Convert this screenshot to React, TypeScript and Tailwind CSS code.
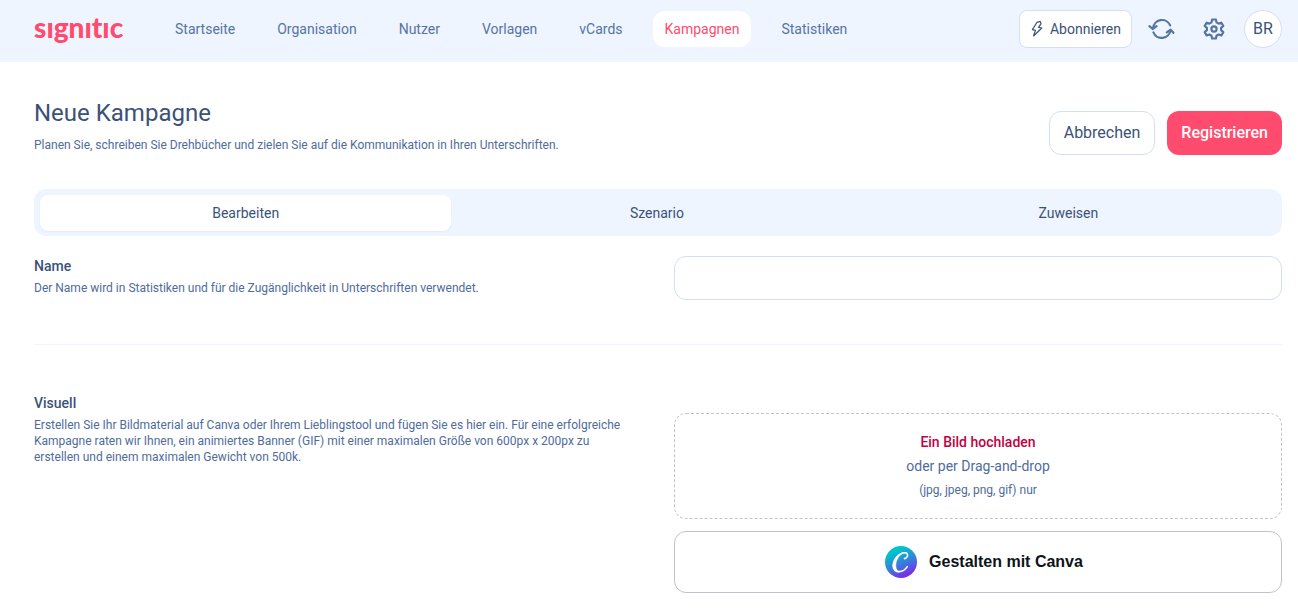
import clsx from "clsx";

const NAV = [
  "Startseite",
  "Organisation",
  "Nutzer",
  "Vorlagen",
  "vCards",
  "Kampagnen",
  "Statistiken",
];

const TABS = ["Bearbeiten", "Szenario", "Zuweisen"];

export default function App() {
  return (
    <div className="min-h-screen bg-white font-['Roboto',sans-serif] text-[#3b5278]">
      <Header />
      <main className="pr-4 pb-4 pl-[34px]">
        <TitleBar />
        <Tabs />
        <NameRow />
        <VisualRow />
      </main>
    </div>
  );
}

function Header() {
  return (
    <header className="flex h-[62px] items-center bg-[#eff5ff] pr-4 pb-1 pl-[34px]">
      <a
        href="#"
        aria-label="signitic"
        className="w-[129px] shrink-0 pb-1 font-['Lato',sans-serif] text-[28px] leading-8 font-black text-[#ff4b6e] [font-variant-ligatures:none]"
      >
        sıgnıtıc
      </a>
      <nav className="flex flex-1 items-center gap-[18px]">
        {NAV.map((item) => (
          <a
            key={item}
            href="#"
            className={clsx(
              "rounded-xl px-3 text-sm leading-9",
              item === "Kampagnen"
                ? "bg-white text-[#ff4b6e]"
                : "text-[#5574a3]",
            )}
          >
            {item}
          </a>
        ))}
      </nav>
      <div className="flex items-center">
        <button
          type="button"
          className="flex h-[38px] items-center gap-1 rounded-lg border border-[#d3dff5] bg-white px-2.5 text-sm"
        >
          <BoltIcon />
          Abonnieren
        </button>
        <button type="button" aria-label="Aktualisieren" className="ml-4">
          <RefreshIcon />
        </button>
        <button type="button" aria-label="Einstellungen" className="ml-[26px]">
          <GearIcon />
        </button>
        <button
          type="button"
          className="ml-[18px] size-[38px] rounded-full border border-[#d3dff5] bg-white text-base"
        >
          BR
        </button>
      </div>
    </header>
  );
}

function TitleBar() {
  return (
    <div className="flex items-center justify-between pt-[33px]">
      <div>
        <h1 className="text-2xl leading-8">Neue Kampagne</h1>
        <p className="mt-2 text-xs leading-4 text-[#4f6c9b]">
          Planen Sie, schreiben Sie Drehbücher und zielen Sie auf die
          Kommunikation in Ihren Unterschriften.
        </p>
      </div>
      <div className="mt-4 flex gap-3">
        <button
          type="button"
          className="h-11 rounded-xl border border-[#d3dff5] px-3.5 text-base"
        >
          Abbrechen
        </button>
        <button
          type="button"
          className="h-11 rounded-xl bg-[#ff4b6e] px-3.5 text-base font-medium text-white"
        >
          Registrieren
        </button>
      </div>
    </div>
  );
}

function Tabs() {
  return (
    <div
      role="tablist"
      className="mt-[34px] grid grid-cols-3 rounded-xl bg-[#eff5ff] pt-1.5 pr-2 pb-[5px] pl-1.5"
    >
      {TABS.map((tab, i) => (
        <button
          key={tab}
          type="button"
          role="tab"
          aria-selected={i === 0}
          className={clsx(
            "h-9 rounded-lg text-sm",
            i === 0 && "bg-white shadow-xs",
          )}
        >
          {tab}
        </button>
      ))}
    </div>
  );
}

function NameRow() {
  return (
    <div className="grid grid-cols-[minmax(0,592fr)_minmax(0,608fr)] gap-12 border-b border-[#eff5ff] pt-5 pb-11">
      <div>
        <label htmlFor="name" className="block text-sm leading-5 font-medium">
          Name
        </label>
        <p className="mt-1 text-xs leading-4 text-[#4f6c9b]">
          Der Name wird in Statistiken und für die Zugänglichkeit in
          Unterschriften verwendet.
        </p>
      </div>
      <input
        id="name"
        type="text"
        className="h-11 w-full rounded-xl border border-[#d3dff5] px-3 outline-none"
      />
    </div>
  );
}

function VisualRow() {
  return (
    <div className="grid grid-cols-[minmax(0,592fr)_minmax(0,608fr)] gap-12 pt-12">
      <div>
        <h2 className="text-sm leading-5 font-medium">Visuell</h2>
        <p className="mt-1 text-xs leading-4 text-[#4f6c9b]">
          Erstellen Sie Ihr Bildmaterial auf Canva oder Ihrem Lieblingstool und
          fügen Sie es hier ein. Für eine erfolgreiche Kampagne raten wir Ihnen,
          ein animiertes Banner (GIF) mit einer maximalen Größe von 600px x
          200px zu erstellen und einem maximalen Gewicht von 500k.
        </p>
      </div>
      <div className="flex flex-col gap-3 pt-5">
        <button
          type="button"
          className="rounded-xl border border-dashed border-[#c4c4c8] py-4 text-center text-[#4f6c9b]"
        >
          <span className="block text-sm leading-6 font-medium text-[#c4003f]">
            Ein Bild hochladen
          </span>
          <span className="block text-sm leading-6">
            oder per Drag-and-drop
          </span>
          <span className="block text-xs leading-6">
            (jpg, jpeg, png, gif) nur
          </span>
        </button>
        <button
          type="button"
          className="flex h-[62px] items-center justify-center gap-3 rounded-xl border border-[#bfc4cb] pl-3 font-['Liberation_Sans',sans-serif] text-base font-bold text-[#0e1318]"
        >
          <CanvaLogo />
          Gestalten mit Canva
        </button>
      </div>
    </div>
  );
}

function BoltIcon() {
  return (
    <svg
      className="h-[18px] w-4"
      viewBox="0 0 16 18"
      fill="none"
      stroke="currentColor"
      strokeWidth="1.2"
      strokeLinejoin="round"
    >
      <path d="M7 2.3 2.4 9.6 5.400 10.400 3.600 16 11.800 8 8.600 7.400 11 3.600 10.200 1.400Z" />
    </svg>
  );
}

function RefreshIcon() {
  return (
    <svg
      className="size-7 text-[#5574a3]"
      viewBox="0 0 28 28"
      fill="none"
      stroke="currentColor"
      strokeWidth="2.200"
      strokeLinecap="round"
      strokeLinejoin="round"
    >
      <path d="M22.2 10.400A9 9 0 0 0 5 13.200M1.400 11.200l3.300 2.800 3.700-2.800" />
      <path d="M5.400 17.400A9 9 0 0 0 22.600 15.200M18.800 17.400l3.900-2.800 2.700 3.200" />
    </svg>
  );
}

function GearIcon() {
  return (
    <svg
      className="size-6 text-[#5574a3]"
      viewBox="0 0 24 24"
      fill="none"
      stroke="currentColor"
      strokeWidth="2.200"
      strokeLinejoin="round"
    >
      <path d="M10.1 2.5h3.8l.6 2.9 2.1 1.2 2.8-.9 1.9 3.3-2.2 1.9v2.3l2.2 1.9-1.9 3.3-2.8-.9-2.1 1.2-.6 2.8h-3.8l-.6-2.8-2.1-1.2-2.8.9-1.9-3.3 2.2-1.9v-2.3L2.7 9l1.9-3.3 2.8.9 2.1-1.2Z" />
      <circle cx="12" cy="12" r="2.6" />
    </svg>
  );
}

function CanvaLogo() {
  return (
    <svg className="size-8" viewBox="0 0 32 32" fill="none" aria-hidden>
      <defs>
        <linearGradient id="canva" x1="10" y1="2" x2="23" y2="31" gradientUnits="userSpaceOnUse">
          <stop offset="0.1" stopColor="#00c4cc" />
          <stop offset="0.55" stopColor="#3a7bdc" />
          <stop offset="0.95" stopColor="#7d2ae8" />
        </linearGradient>
      </defs>
      <circle cx="16" cy="16" r="16" fill="url(#canva)" />
      <path
        d="M19.5 12.6C21.600 12.300 22.900 10.200 22.500 8.600 22 6.800 20 6.300 17.800 7 12.500 8.600 8.500 14.600 8.500 19.600 8.500 23.300 10.600 25.600 14 25.600 17.600 25.600 20.400 23.600 22.300 20.600"
        stroke="#fff"
        strokeWidth="1.6"
        strokeLinecap="round"
      />
      <path
        d="M17.800 6.600C11.500 8.500 7.700 14.600 7.700 19.600 7.700 23.600 10 26.200 14 26.300 8.800 22.500 9.800 12.800 17.800 6.600Z"
        fill="#fff"
        stroke="#fff"
        strokeWidth="0.5"
      />
    </svg>
  );
}
